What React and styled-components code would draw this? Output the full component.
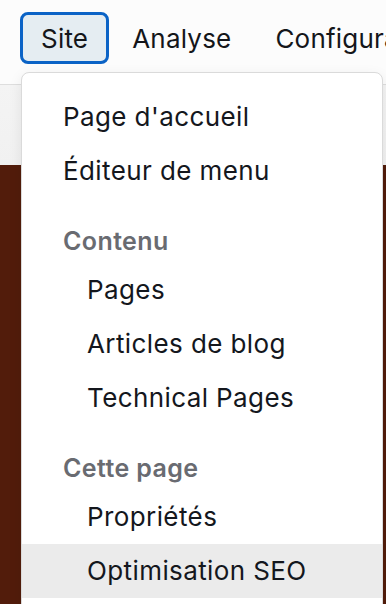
import React from "react"
import styled, { createGlobalStyle } from "styled-components"

const GlobalStyle = createGlobalStyle`
  html, body {
    margin: 0;
    padding: 0;
    background: #521c0b;
    font-family: Inter, "Noto Sans", "Liberation Sans", sans-serif;
    -webkit-font-smoothing: antialiased;
  }
  * { box-sizing: border-box; }
`

const Page = styled.div`
  position: relative;
  width: 386px;
  height: 604px;
  overflow: hidden;
  display: flex;
  flex-direction: column;
`

const TopBar = styled.header`
  height: 85px;
  background: #fcfcfc;
  border-bottom: 1px solid #dedede;
  display: flex;
  align-items: flex-start;
  padding: 12px 0 0 20px;
  overflow: hidden;
`

const Nav = styled.nav`
  display: flex;
  gap: 2px;
  white-space: nowrap;
`

const NavButton = styled.button`
  height: 52px;
  padding: 0 18px;
  border: 3px solid ${p => (p.$active ? "#0b63c6" : "transparent")};
  border-radius: 8px;
  background: ${p => (p.$active ? "#e5edf2" : "transparent")};
  font-family: inherit;
  font-size: 26px;
  letter-spacing: 0.2px;
  color: #14161a;
  display: flex;
  align-items: center;
`

const Band = styled.div`
  height: 80px;
  background: linear-gradient(180deg, #f4f4f4, #f1f1f1);
`

const Content = styled.div`
  flex: 1;
  background: #521c0b;
`

const Menu = styled.div`
  position: absolute;
  top: 72px;
  left: 21px;
  width: 362px;
  height: 560px;
  background: #fff;
  border: 1px solid #dadada;
  border-radius: 8px;
  box-shadow: 0 4px 14px rgba(0, 0, 0, 0.08);
  padding-top: 17px;
  display: flex;
  flex-direction: column;
`

const Item = styled.div`
  height: 54px;
  line-height: 54px;
  padding-left: ${p => (p.$nested ? 65 : 41)}px;
  font-size: 26px;
  letter-spacing: 0.4px;
  color: #14171d;
  background: ${p => (p.$hover ? "#ebebeb" : "transparent")};
  white-space: nowrap;
`

const GroupLabel = styled.div`
  margin-top: 17px;
  height: 48px;
  line-height: 52px;
  padding-left: 41px;
  font-size: 25px;
  letter-spacing: 0.4px;
  font-weight: 600;
  color: #696b71;
`

const App = () => (
  <Page>
    <GlobalStyle />
    <TopBar>
      <Nav>
        <NavButton $active>Site</NavButton>
        <NavButton>Analyse</NavButton>
        <NavButton>Configuration</NavButton>
      </Nav>
    </TopBar>
    <Band />
    <Content />
    <Menu>
      <Item>Page d'accueil</Item>
      <Item>Éditeur de menu</Item>
      <GroupLabel>Contenu</GroupLabel>
      <Item $nested>Pages</Item>
      <Item $nested>Articles de blog</Item>
      <Item $nested>Technical Pages</Item>
      <GroupLabel>Cette page</GroupLabel>
      <Item $nested>Propriétés</Item>
      <Item $nested $hover>Optimisation SEO</Item>
    </Menu>
  </Page>
)

export default App
